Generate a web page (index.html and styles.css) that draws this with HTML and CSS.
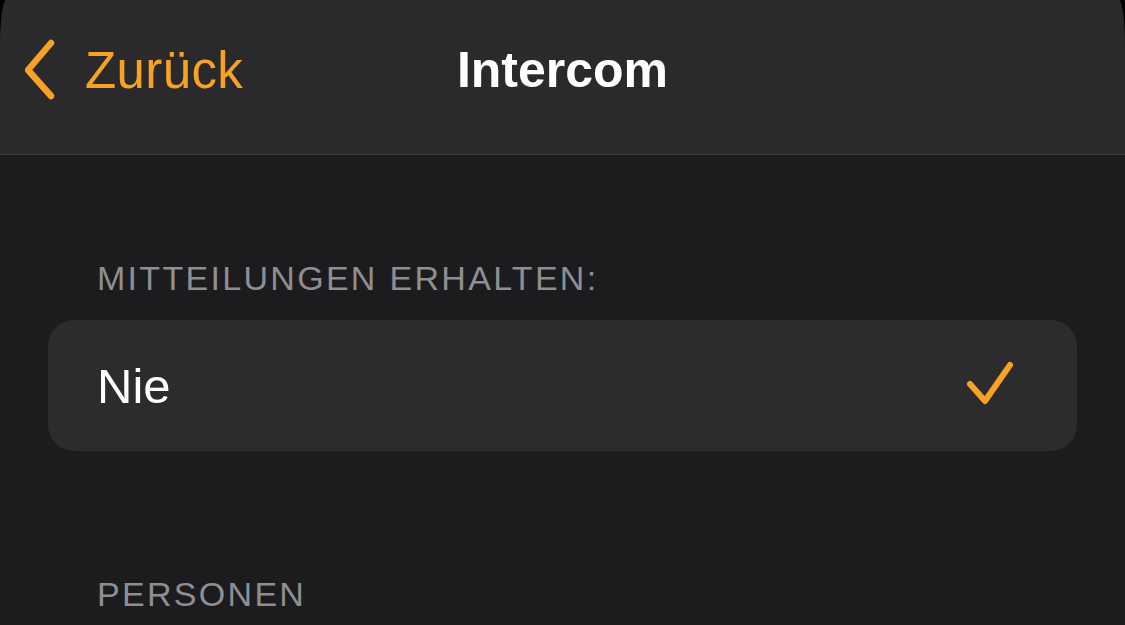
FILE: index.html
```html
<!DOCTYPE html>
<html lang="de">
<head>
<meta charset="utf-8">
<link rel="stylesheet" href="styles.css">
</head>
<body>
<div class="screen">
  <header class="nav">
    <a class="back">
      <svg class="chev" width="40" height="64" viewBox="0 0 40 64"><path d="M26 4 L3 31 L26 57" fill="none" stroke="#f7a125" stroke-width="6.5" stroke-linecap="round" stroke-linejoin="round"/></svg>
      <span class="back-label">Zurück</span>
    </a>
    <h1 class="title">Intercom</h1>
  </header>
  <main class="content">
    <div class="section-header first">MITTEILUNGEN ERHALTEN:</div>
    <div class="card">
      <div class="row">
        <span class="row-label">Nie</span>
        <svg class="check" width="52" height="50" viewBox="0 0 52 50"><path d="M5 23 L20 40 L45 4" fill="none" stroke="#f7a125" stroke-width="6" stroke-linecap="round" stroke-linejoin="round"/></svg>
      </div>
    </div>
    <div class="section-header second">PERSONEN</div>
  </main>
</div>
</body>
</html>
```
FILE: styles.css
```css
* { box-sizing: border-box; }
html, body {
  margin: 0;
  padding: 0;
  background: #000;
  font-family: "Liberation Sans", Arial, sans-serif;
}
.screen {
  width: 1125px;
  height: 625px;
  overflow: hidden;
  background: #1c1c1e;
  border-top-left-radius: 6px 50px;
  border-top-right-radius: 6px 50px;
}
.nav {
  position: relative;
  height: 155px;
  background: #2a2a2c;
  border-bottom: 1px solid #3c3c3e;
  display: flex;
  align-items: center;
  justify-content: center;
}
.back {
  position: absolute;
  left: 25px;
  top: 39px;
  display: flex;
  align-items: center;
  gap: 20px;
  color: #f7a125;
}
.chev { display: block; }
.back-label {
  font-size: 51px;
  line-height: 64px;
  letter-spacing: 0.4px;
}
.title {
  margin: 0 0 14px 0;
  font-size: 50px;
  font-weight: bold;
  color: #ffffff;
  line-height: 64px;
}
.content {
  padding: 0 48px 0 48px;
}
.section-header {
  padding-left: 49px;
  font-size: 34px;
  line-height: 40px;
  color: #8e8e93;
  letter-spacing: 2.3px;
}
.section-header.first { margin-top: 103px; }
.section-header.second { margin-top: 123px; }
.card {
  margin-top: 22px;
  background: #2c2c2e;
  border-radius: 26px;
  height: 131px;
}
.row {
  height: 100%;
  display: flex;
  align-items: center;
  justify-content: space-between;
  padding: 0 60px 0 49px;
}
.row-label {
  font-size: 49px;
  color: #ffffff;
}
.check { display: block; margin-top: 0; }
```
